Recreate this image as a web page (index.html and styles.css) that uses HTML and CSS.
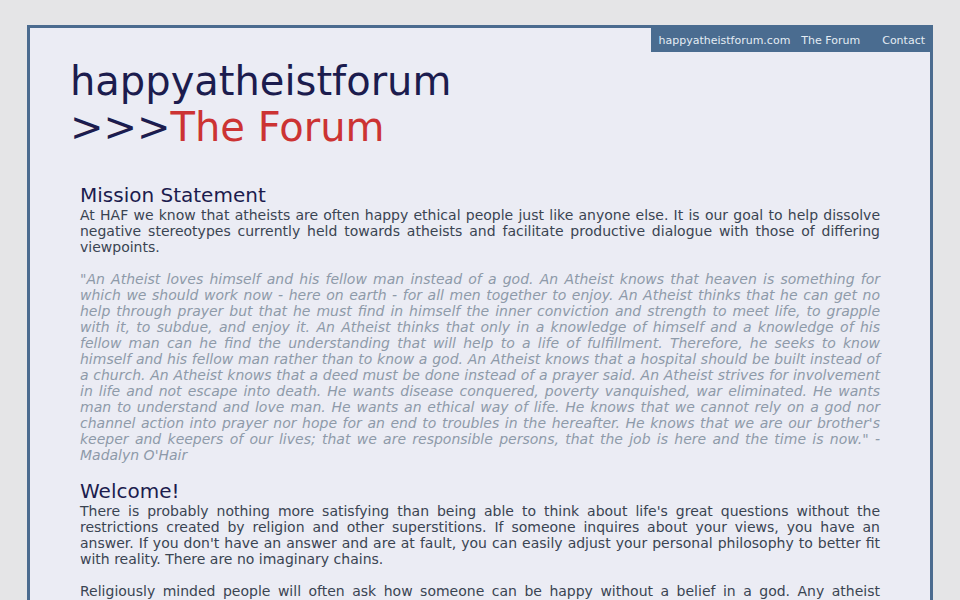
FILE: index.html
```html
<!DOCTYPE html>
<html>
<head>
<meta charset="utf-8">
<title>happyatheistforum - The Forum</title>
<link rel="stylesheet" href="styles.css">
</head>
<body>
<div class="page">
  <nav class="nav">
    <a class="nav-link nav-first" href="#">happyatheistforum.com</a><a class="nav-link nav-second" href="#">The Forum</a><a class="nav-link nav-last" href="#">Contact</a>
  </nav>
  <header class="header">
    <h1 class="title">happyatheistforum<br>&gt;&gt;&gt;<span class="title-red">The Forum</span></h1>
  </header>
  <main class="content">
    <h2 class="heading">Mission Statement</h2>
    <p class="text">At HAF we know that atheists are often happy ethical people just like anyone else. It is our goal to help dissolve negative stereotypes currently held towards atheists and facilitate productive dialogue with those of differing viewpoints.</p>
    <p class="text quote">"An Atheist loves himself and his fellow man instead of a god. An Atheist knows that heaven is something for which we should work now - here on earth - for all men together to enjoy. An Atheist thinks that he can get no help through prayer but that he must find in himself the inner conviction and strength to meet life, to grapple with it, to subdue, and enjoy it. An Atheist thinks that only in a knowledge of himself and a knowledge of his fellow man can he find the understanding that will help to a life of fulfillment. Therefore, he seeks to know himself and his fellow man rather than to know a god. An Atheist knows that a hospital should be built instead of a church. An Atheist knows that a deed must be done instead of a prayer said. An Atheist strives for involvement in life and not escape into death. He wants disease conquered, poverty vanquished, war eliminated. He wants man to understand and love man. He wants an ethical way of life. He knows that we cannot rely on a god nor channel action into prayer nor hope for an end to troubles in the hereafter. He knows that we are our brother's keeper and keepers of our lives; that we are responsible persons, that the job is here and the time is now." - Madalyn O'Hair</p>
    <h2 class="heading">Welcome!</h2>
    <p class="text">There is probably nothing more satisfying than being able to think about life's great questions without the restrictions created by religion and other superstitions. If someone inquires about your views, you have an answer. If you don't have an answer and are at fault, you can easily adjust your personal philosophy to better fit with reality. There are no imaginary chains.</p>
    <p class="text">Religiously minded people will often ask how someone can be happy without a belief in a god. Any atheist understands that happiness comes from the people around you, the things you do and the way you choose to live your life.</p>
  </main>
</div>
</body>
</html>
```

FILE: styles.css
```css
html, body {
  margin: 0;
  padding: 0;
}
body {
  background: #e5e5e7;
  font-family: "DejaVu Sans", Verdana, sans-serif;
  overflow: hidden;
}
.page {
  position: relative;
  margin: 25px 0 0 27px;
  width: 900px;
  min-height: 700px;
  border: 3px solid #4b6b8f;
  background: #ebecf4;
}
.nav {
  position: absolute;
  top: -3px;
  right: -3px;
  height: 27px;
  padding: 0 8px 0 7px;
  background: #4a6c90;
  display: flex;
  align-items: center;
  font-size: 11px;
}
.nav-link {
  color: #e4ecf4;
  text-decoration: none;
  line-height: 27px;
  padding-top: 3px;
}
.nav-first { margin-right: 11px; }
.nav-second { margin-right: 22px; }
.header {
  padding: 30px 0 0 40px;
}
.title {
  margin: 0;
  font-size: 40px;
  font-weight: normal;
  line-height: normal;
  color: #1c1c4e;
}
.title-red {
  color: #cc3333;
}
.content {
  padding: 33px 50px 0 50px;
}
.heading {
  margin: 0;
  font-size: 20px;
  font-weight: normal;
  line-height: normal;
  color: #1c1c4e;
}
.text {
  margin: 0 0 16px;
  font-size: 14px;
  line-height: 16px;
  text-align: justify;
  color: #3a4452;
}
.quote {
  font-style: italic;
  color: #8e9aa9;
}
```
